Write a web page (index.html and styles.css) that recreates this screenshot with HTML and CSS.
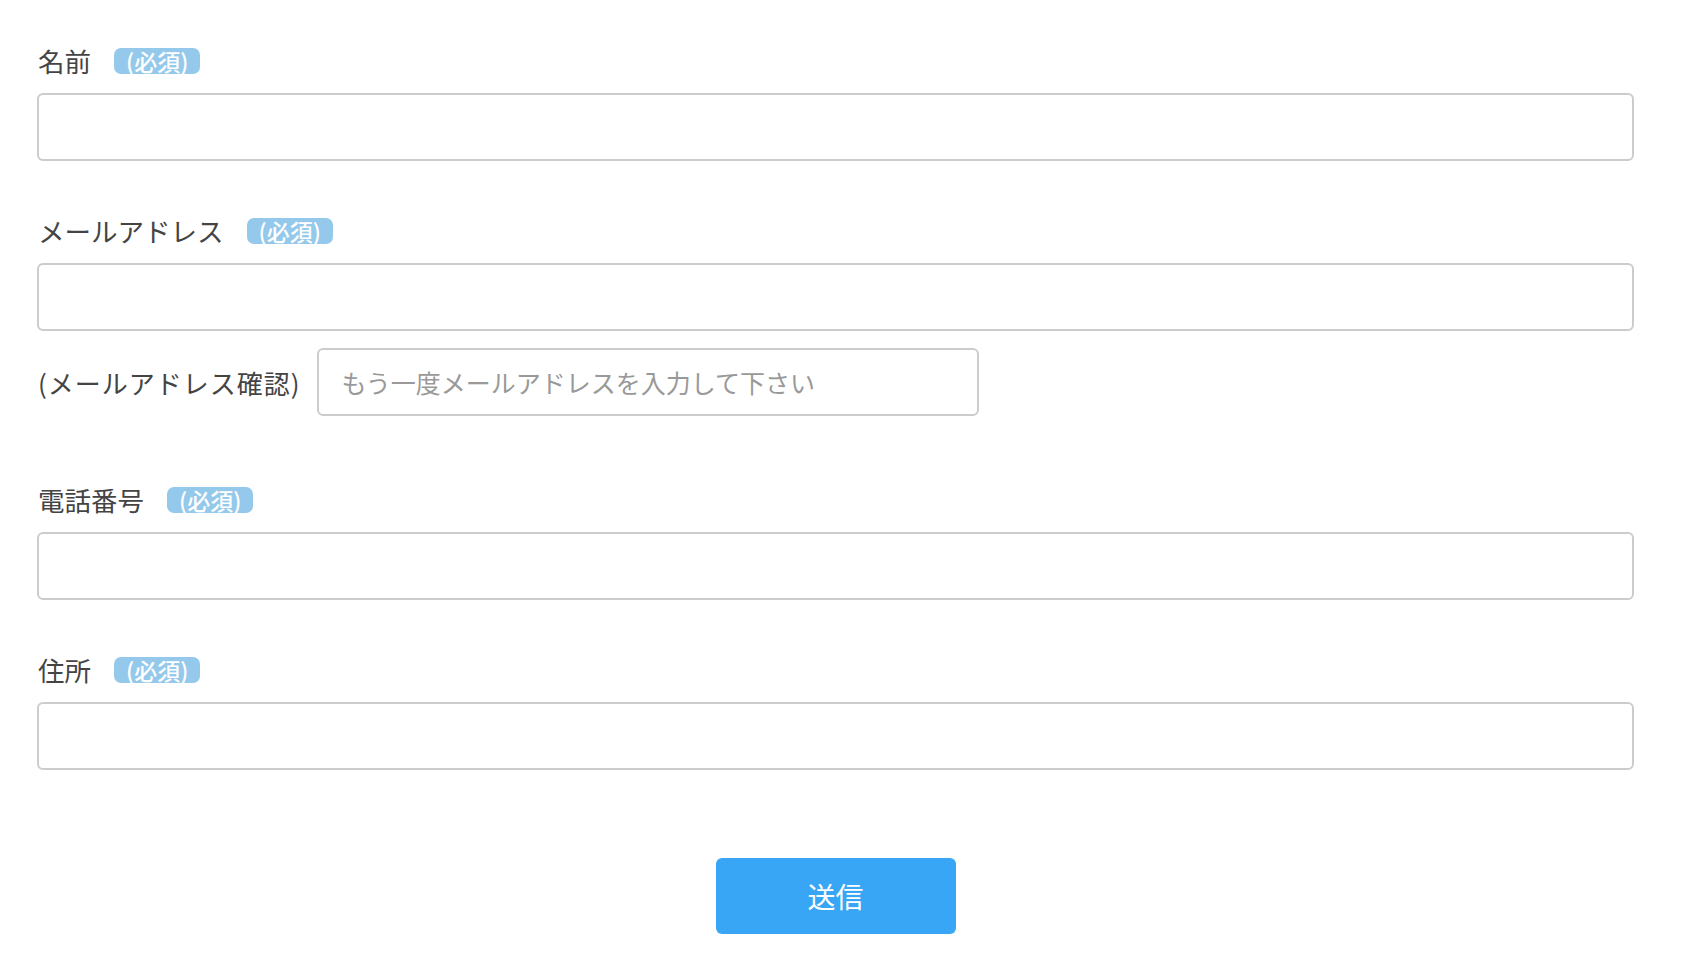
FILE: index.html
```html
<!DOCTYPE html>
<html lang="ja">
<head>
    <meta charset="UTF-8">
    <meta name="viewport" content="width=device-width, initial-scale=1.0">
    <title>お問い合わせ</title>
    <link rel="stylesheet" href="styles.css">
</head>
<body>
    <form class="contact-form" onsubmit="return false;">
        <div class="form-group">
            <div class="form-label">
                <label for="name">名前</label>
                <span class="required">(必須)</span>
            </div>
            <input type="text" id="name" class="input-field">
        </div>

        <div class="form-group">
            <div class="form-label">
                <label for="email">メールアドレス</label>
                <span class="required">(必須)</span>
            </div>
            <input type="email" id="email" class="input-field">
            <div class="confirm-row">
                <label for="emailConfirm">(メールアドレス確認)</label>
                <input type="email" id="emailConfirm" class="input-field confirm-field" placeholder="もう一度メールアドレスを入力して下さい">
            </div>
        </div>

        <div class="form-group phone-group">
            <div class="form-label">
                <label for="tel">電話番号</label>
                <span class="required">(必須)</span>
            </div>
            <input type="tel" id="tel" class="input-field">
        </div>

        <div class="form-group">
            <div class="form-label">
                <label for="address">住所</label>
                <span class="required">(必須)</span>
            </div>
            <input type="text" id="address" class="input-field">
        </div>

        <div class="button-group">
            <button type="submit" class="submit-btn">送信</button>
        </div>
    </form>
</body>
</html>
```

FILE: styles.css
```css
body {
    font-family: "Noto Sans CJK JP", "Noto Sans", sans-serif;
    margin: 0;
    background-color: #fff;
    color: #444;
}

.contact-form {
    padding: 41px 48px 0 37px;
}

.form-group {
    margin-bottom: 50px;
}

.phone-group {
    margin-top: 64px;
}

.form-label {
    display: flex;
    align-items: center;
    height: 39px;
    margin-bottom: 13px;
    font-size: 26.5px;
}

.form-label label {
    margin-left: 1px;
}

.required {
    display: inline-block;
    margin-left: 23px;
    padding: 0 12px;
    height: 26px;
    line-height: 26px;
    font-size: 23px;
    font-weight: 500;
    color: #fff;
    background: #95c9ec;
    border-radius: 7px;
}

.input-field {
    display: block;
    width: 100%;
    height: 68px;
    padding: 0 23px;
    border: 2px solid #ccc;
    border-radius: 6px;
    box-sizing: border-box;
    font-family: inherit;
    font-size: 25px;
    color: #444;
    background: #fff;
    outline: none;
}

.input-field::placeholder {
    color: #999;
}

.confirm-row {
    display: flex;
    align-items: center;
    gap: 16px;
    margin-top: 17px;
    font-size: 26px;
}

.confirm-row label {
    margin-left: 1px;
    letter-spacing: 1px;
    white-space: nowrap;
}

.confirm-field {
    width: 662px;
}

.button-group {
    display: flex;
    justify-content: center;
    margin-top: 88px;
}

.submit-btn {
    width: 240px;
    height: 76px;
    border: none;
    border-radius: 6px;
    background: #38a6f5;
    color: #fff;
    font-family: inherit;
    font-size: 28px;
    cursor: pointer;
}

.submit-btn:hover {
    background: #2196f3;
}
```
